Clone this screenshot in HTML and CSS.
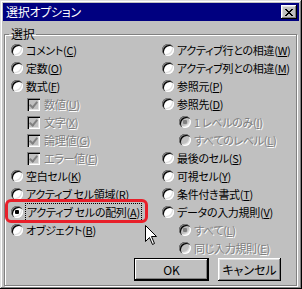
FILE: index.html
```html
<!DOCTYPE html>
<html lang="ja">
<head>
    <meta charset="UTF-8">
    <title>選択オプション</title>
    <link rel="stylesheet" href="styles.css">
</head>
<body>
    <div class="window">
        <div class="titlebar">
            <span class="title">選択オプション</span>
            <span class="close">
                <svg width="8" height="7" viewBox="0 0 8 7"><path d="M0 0h2v1h1v1h2V1h1V0h2v1H7v1H6v1H5v1h1v1h1v1h1v1H6V6H5V5H3v1H2v1H0V6h1V5h1V4h1V3H2V2H1V1H0z" fill="#000"/></svg>
            </span>
        </div>

        <fieldset class="group">
            <legend>選択</legend>
            <div class="cols">
                <div class="col">
                    <div class="opt"><span class="radio"></span><span>コメント(<u>C</u>)</span></div>
                    <div class="opt"><span class="radio"></span><span>定数(<u>O</u>)</span></div>
                    <div class="opt"><span class="radio"></span><span>数式(<u>F</u>)</span></div>
                    <div class="opt sub off"><span class="check"></span><span>数値(<u>U</u>)</span></div>
                    <div class="opt sub off"><span class="check"></span><span>文字(<u>X</u>)</span></div>
                    <div class="opt sub off"><span class="check"></span><span>論理値(<u>G</u>)</span></div>
                    <div class="opt sub off"><span class="check"></span><span>エラー値(<u>E</u>)</span></div>
                    <div class="opt"><span class="radio"></span><span>空白セル(<u>K</u>)</span></div>
                    <div class="opt"><span class="radio"></span><span>アクティブ セル領域(<u>R</u>)</span></div>
                    <div class="opt marked"><span class="radio on"></span><span class="focus">アクティブ セルの配列(<u>A</u>)</span></div>
                    <div class="opt"><span class="radio"></span><span>オブジェクト(<u>B</u>)</span></div>
                </div>
                <div class="col">
                    <div class="opt"><span class="radio"></span><span>アクティブ行との相違(<u>W</u>)</span></div>
                    <div class="opt"><span class="radio"></span><span>アクティブ列との相違(<u>M</u>)</span></div>
                    <div class="opt"><span class="radio"></span><span>参照元(<u>P</u>)</span></div>
                    <div class="opt"><span class="radio"></span><span>参照先(<u>D</u>)</span></div>
                    <div class="opt sub off"><span class="radio on"></span><span>1 レベルのみ(<u>I</u>)</span></div>
                    <div class="opt sub off"><span class="radio"></span><span>すべてのレベル(<u>L</u>)</span></div>
                    <div class="opt"><span class="radio"></span><span>最後のセル(<u>S</u>)</span></div>
                    <div class="opt"><span class="radio"></span><span>可視セル(<u>Y</u>)</span></div>
                    <div class="opt"><span class="radio"></span><span>条件付き書式(<u>T</u>)</span></div>
                    <div class="opt"><span class="radio"></span><span>データの入力規則(<u>V</u>)</span></div>
                    <div class="opt sub off"><span class="radio on"></span><span>すべて(<u>L</u>)</span></div>
                    <div class="opt sub off"><span class="radio"></span><span>同じ入力規則(<u>E</u>)</span></div>
                </div>
            </div>

            <div class="buttons">
                <button class="btn default">OK</button>
                <button class="btn">キャンセル</button>
            </div>
        </fieldset>

        <svg class="cursor" width="12" height="20" viewBox="0 0 12 20"><path d="M0.5 0.5V16.5L4.5 12.5L7.5 19.5L9.5 18.5L6.5 11.5H11.5Z" fill="#fff" stroke="#000" stroke-width="1"/></svg>
    </div>
</body>
</html>
```

FILE: styles.css
```css
* {
    margin: 0;
    padding: 0;
    box-sizing: border-box;
}

body {
    background: #c0c0c0;
    font-family: "Noto Sans CJK JP", sans-serif;
    font-size: 11px;
    font-feature-settings: "palt";
    letter-spacing: -0.3px;
    color: #000;
}

.window {
    position: relative;
    width: 302px;
    height: 289px;
    padding: 3px;
    background: #c0c0c0;
    box-shadow: inset -1px -1px #000, inset 1px 1px #dfdfdf, inset -2px -2px #808080, inset 2px 2px #fff;
}

.titlebar {
    height: 18px;
    background: #000080;
    color: #fff;
    display: flex;
    align-items: center;
    justify-content: space-between;
    padding: 0 2px 0 3px;
}

.title {
    font-size: 12px;
    line-height: 18px;
}

.close {
    width: 16px;
    height: 14px;
    background: #c0c0c0;
    display: flex;
    align-items: center;
    justify-content: center;
    box-shadow: inset -1px -1px #000, inset 1px 1px #fff, inset -2px -2px #808080, inset 2px 2px #dfdfdf;
}

.group {
    margin: 6px 2px 0 1px;
    height: 259px;
    border: 1px solid #808080;
    box-shadow: inset 1px 1px #fff, 1px 1px #fff;
    padding: 0;
}

.group legend {
    margin-left: 4px;
    padding: 0 2px;
    line-height: 14px;
    font-size: 12px;
}

.cols {
    display: grid;
    grid-template-columns: 151px 1fr;
    padding-left: 6px;
}

.opt {
    position: relative;
    height: 18px;
    display: flex;
    align-items: center;
    gap: 3px;
    white-space: nowrap;
    line-height: 14px;
}

.opt.sub {
    padding-left: 16px;
}

.col:last-child .opt.sub {
    padding-left: 17px;
}

.opt.off {
    color: #808080;
    text-shadow: 1px 1px 0 #fff;
}

.opt u {
    text-underline-offset: 1px;
}

.radio {
    flex: none;
    width: 12px;
    height: 12px;
    border-radius: 50%;
    background: #fff;
    position: relative;
    box-shadow: inset 1px 1px #808080, inset 2px 2px #000, inset -1px -1px #fff, inset -2px -2px #dfdfdf;
}

.off .radio {
    background: #c0c0c0;
}

.radio.on::after {
    content: "";
    position: absolute;
    left: 4px;
    top: 4px;
    width: 4px;
    height: 4px;
    border-radius: 1px;
    background: #000;
}

.off .radio.on::after {
    background: #808080;
}

.check {
    flex: none;
    width: 13px;
    height: 13px;
    margin-right: 1px;
    background: #c0c0c0;
    box-shadow: inset 1px 1px #808080, inset 2px 2px #000, inset -1px -1px #fff, inset -2px -2px #dfdfdf;
    position: relative;
}

.check::after {
    content: "";
    position: absolute;
    left: 4px;
    top: 2px;
    width: 3px;
    height: 6px;
    border: solid #808080;
    border-width: 0 2px 2px 0;
    transform: rotate(40deg);
}

.focus {
    outline: 1px dotted #000;
    padding: 1px 1px 2px;
}

.marked::before {
    content: "";
    position: absolute;
    left: -6px;
    right: 14px;
    top: -4px;
    bottom: -2px;
    border: 3px solid #e8202a;
    border-radius: 6px;
}

.buttons {
    display: flex;
    justify-content: flex-end;
    gap: 9px;
    padding: 1px 15px 0 0;
}

.btn {
    font: inherit;
    font-size: 12px;
    height: 23px;
    width: 75px;
    background: #c0c0c0;
    border: none;
    box-shadow: inset -1px -1px #000, inset 1px 1px #fff, inset -2px -2px #808080, inset 2px 2px #dfdfdf;
}

.btn.default {
    box-shadow: inset 0 0 0 1px #000, inset -2px -2px #000, inset 2px 2px #fff, inset -3px -3px #808080;
}

.btn:last-child {
    width: 63px;
}

.cursor {
    position: absolute;
    left: 145px;
    top: 225px;
}
```
